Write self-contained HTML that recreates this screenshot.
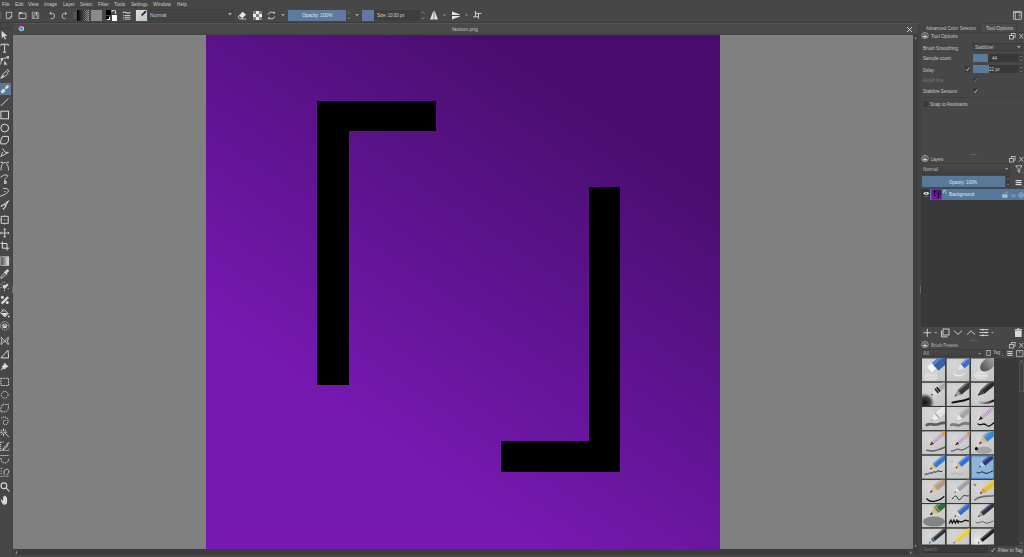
<!DOCTYPE html>
<html><head><meta charset="utf-8">
<style>
*{margin:0;padding:0;box-sizing:border-box}
html,body{width:1024px;height:557px;overflow:hidden;background:#474747;font-family:"Liberation Sans",sans-serif;color:#d6d6d6}
.a{position:absolute}
.m{position:absolute;top:1px;white-space:nowrap;font-size:6px;line-height:6px;color:#cfcfcf;transform:scaleX(.8);transform-origin:0 0}
.m2{position:absolute;white-space:nowrap;font-size:5.5px;line-height:6px;transform:scaleX(.85);transform-origin:0 0}
svg.a{overflow:visible}
.t{position:absolute;white-space:nowrap}
</style></head><body>
<!-- menu bar -->
<div class="a" style="left:0;top:0;width:1024px;height:8px;background:#464646"></div>
<div class="a" style="left:0;top:7px;width:1024px;height:1px;background:#434343"></div>

<div class="t" style="left:1.90px;top:1.56px;font-size:5.96px;line-height:5.96px;color:#cdcdcd;transform:scaleX(0.782);transform-origin:0 0;">File</div>
<div class="t" style="left:14.60px;top:1.56px;font-size:5.96px;line-height:5.96px;color:#cdcdcd;transform:scaleX(0.817);transform-origin:0 0;">Edit</div>
<div class="t" style="left:28.30px;top:1.56px;font-size:5.96px;line-height:5.96px;color:#cdcdcd;transform:scaleX(0.835);transform-origin:0 0;">View</div>
<div class="t" style="left:44.00px;top:1.56px;font-size:5.96px;line-height:5.96px;color:#cdcdcd;transform:scaleX(0.791);transform-origin:0 0;">Image</div>
<div class="t" style="left:63.00px;top:1.56px;font-size:5.96px;line-height:5.96px;color:#cdcdcd;transform:scaleX(0.785);transform-origin:0 0;">Layer</div>
<div class="t" style="left:80.00px;top:1.56px;font-size:5.96px;line-height:5.96px;color:#cdcdcd;transform:scaleX(0.742);transform-origin:0 0;">Select</div>
<div class="t" style="left:97.80px;top:1.56px;font-size:5.96px;line-height:5.96px;color:#cdcdcd;transform:scaleX(0.816);transform-origin:0 0;">Filter</div>
<div class="t" style="left:113.90px;top:1.56px;font-size:5.96px;line-height:5.96px;color:#cdcdcd;transform:scaleX(0.812);transform-origin:0 0;">Tools</div>
<div class="t" style="left:131.00px;top:1.56px;font-size:5.96px;line-height:5.96px;color:#cdcdcd;transform:scaleX(0.771);transform-origin:0 0;">Settings</div>
<div class="t" style="left:153.00px;top:1.56px;font-size:5.96px;line-height:5.96px;color:#cdcdcd;transform:scaleX(0.848);transform-origin:0 0;">Window</div>
<div class="t" style="left:176.90px;top:1.56px;font-size:5.96px;line-height:5.96px;color:#cdcdcd;transform:scaleX(0.800);transform-origin:0 0;">Help</div>
<!-- toolbar -->
<div class="a" style="left:0;top:8px;width:1024px;height:14px;background:#474747"></div>
<div class="a" style="left:0;top:22px;width:918px;height:1px;background:#3d3d3d"></div>
<div class="a" style="left:0;top:23px;width:918px;height:1px;background:#535353"></div>
<svg class="a" style="left:0;top:8px" width="500" height="14" viewBox="0 8 500 14">
 <g fill="none" stroke="#cfcfcf" stroke-width="0.8">
  <rect x="0" y="12" width="1.3" height="7" fill="#5c5c5c" stroke="none"/>
  <!-- new -->
  <path d="M6.3 12.3h5.4v4.6l-1.7 1.7h-3.7z"/>
  <path d="M10 18.6v-1.7h1.7" />
  <!-- open -->
  <path d="M19 13.2h7v5.4h-7z"/>
  <rect x="19" y="12.2" width="3" height="1.6" fill="#cfcfcf" stroke="none"/>
  <!-- save -->
  <path d="M31.8 11.8h6.3l1 1v6.3h-7.3z" fill="#8e8e8e" stroke="none"/>
  <rect x="33.5" y="13" width="4" height="2" fill="none" stroke="#555" stroke-width="0.7"/>
  <rect x="36.2" y="12.2" width="0.9" height="2.5" fill="#ddd" stroke="none"/>
  <rect x="34.2" y="16" width="2.8" height="1.8" fill="#555" stroke="none"/>
  <!-- undo -->
  <path d="M50 13.4h2.2a2.4 2.6 0 0 1 0 5.2h-1.6"/>
  <path d="M51.3 11.9l-1.6 1.5l1.6 1.5"/>
  <!-- redo -->
  <path d="M66 13.4h-1.6a2.4 2.6 0 0 0 0 5.2h1.2"/>
  <path d="M65 11.9l1.6 1.5l-1.6 1.5"/>
 </g>
 <rect x="73" y="11.7" width="3.5" height="7" fill="#565656"/>
</svg>
<!-- gradient swatch -->
<div class="a" style="left:77px;top:10px;width:11.5px;height:10.5px;background:linear-gradient(90deg,#000 0%,#222 25%,rgba(60,60,60,0) 100%),repeating-conic-gradient(#b0b0b0 0 25%,#505050 0 50%) 0 0/2px 2px"></div>
<!-- pattern swatch -->
<div class="a" style="left:91px;top:10px;width:10.5px;height:10.5px;background:#8a8a8a"></div>
<!-- fg/bg -->
<div class="a" style="left:106px;top:10px;width:5px;height:5px;background:#000"></div>
<div class="a" style="left:111.5px;top:15px;width:5.5px;height:5.5px;background:#fff"></div>
<div class="a" style="left:106px;top:16px;width:2.5px;height:2.5px;background:#000;box-shadow:1px 1px 0 #fff"></div>
<svg class="a" style="left:110px;top:9px" width="8" height="7" viewBox="0 0 8 7"><path d="M2 1.5h3.5v3M1 3l1-1.5 1 1.5M4.5 3.5l1 1 1-1" fill="none" stroke="#ddd" stroke-width="0.8"/></svg>
<!-- brush settings icon -->
<svg class="a" style="left:122px;top:9px" width="11" height="12" viewBox="0 0 11 12"><g fill="none" stroke="#d8d8d8" stroke-width="1.1"><path d="M0.8 3.8c1.5-1.6 2.8-.6 3.8 0s2.2 1 3.8-.6"/></g><g fill="#c4c4c4"><rect x="1.2" y="6" width="7.2" height="1"/><rect x="1.2" y="7.8" width="7.2" height="1"/><rect x="1.2" y="9.6" width="7.2" height="1"/></g><g fill="#474747"><rect x="2.2" y="5.8" width=".5" height="5"/></g></svg>
<!-- preset swatch -->
<div class="a" style="left:136px;top:10px;width:11px;height:11px;background:linear-gradient(135deg,#dcdcdc,#c6c6c6);box-shadow:0 0 0 .5px #555"></div>
<svg class="a" style="left:136px;top:10px" width="11" height="11" viewBox="0 0 11 11"><path d="M5.5 5.6L10 1.2" stroke="#1e2238" stroke-width="1.7"/><path d="M6.6 4.5l.8-.8" stroke="#a03030" stroke-width="1.7"/><path d="M3.8 7.4L5.6 5.5" stroke="#d8c070" stroke-width="1.1"/><path d="M3 9.5c2 .5 4 0 7 .3" stroke="#bbb" stroke-width=".6" fill="none"/></svg>
<!-- blend dropdown -->
<div class="a" style="left:148px;top:9px;width:86px;height:12px;background:#434343;border:1px solid #3f3f3f"></div>
<svg class="a" style="left:228px;top:13px" width="4" height="3" viewBox="0 0 4 3"><path d="M0 0h4l-2 2.5z" fill="#aaa"/></svg>
<!-- eraser -->
<svg class="a" style="left:238px;top:11px" width="9" height="9" viewBox="0 0 9 9"><path d="M4.5 0.8l3.5 2.6l-3.3 3.6l-3.5-2.6z" fill="#e6e6e6"/><path d="M1.2 4.4l3.5 2.6l-0.8 0.9h-2.2l-1.3-1.2z" fill="none" stroke="#e6e6e6" stroke-width="0.8"/><path d="M4 8h4" stroke="#e6e6e6" stroke-width="0.8"/></svg>
<!-- alpha lock checker -->
<svg class="a" style="left:253px;top:10.5px" width="9" height="9" viewBox="0 0 9 9"><rect width="9" height="9" fill="#808080"/><g fill="#eeeeee"><rect x="3" y="0" width="3" height="3"/><rect x="0" y="3" width="3" height="3"/><rect x="6" y="3" width="3" height="3"/><rect x="3" y="6" width="3" height="3"/></g></svg>
<!-- reload -->
<svg class="a" style="left:267px;top:11px" width="9" height="9" viewBox="0 0 9 9"><g fill="none" stroke="#d8d8d8" stroke-width="0.9"><path d="M1.2 3.5a3.5 3.5 0 0 1 6 -1.2"/><path d="M7.8 5.5a3.5 3.5 0 0 1 -6 1.2"/><path d="M6 1.4l1.4 1l0.2-1.6"/><path d="M3 7.6l-1.4 -1l-0.2 1.6"/></g></svg>
<svg class="a" style="left:281px;top:14px" width="4" height="3" viewBox="0 0 4 3"><path d="M0 0h4l-2 2.5z" fill="#999"/></svg>
<!-- opacity slider -->
<div class="a" style="left:288px;top:10px;width:58px;height:11px;background:#5b7c9c"></div>
<svg class="a" style="left:346px;top:10px" width="6" height="11" viewBox="0 0 6 11"><path d="M1.5 3.5l1.5-1.5 1.5 1.5M1.5 7.5l1.5 1.5 1.5-1.5" fill="none" stroke="#888" stroke-width="0.7"/></svg>
<svg class="a" style="left:355px;top:14px" width="4" height="3" viewBox="0 0 4 3"><path d="M0 0h4l-2 2.5z" fill="#999"/></svg>
<!-- size slider -->
<div class="a" style="left:362px;top:10px;width:58px;height:11px;background:#3e3e3e"></div>
<div class="a" style="left:362px;top:10px;width:12px;height:11px;background:#5b7c9c"></div>
<svg class="a" style="left:420px;top:10px" width="6" height="11" viewBox="0 0 6 11"><path d="M1.5 3.5l1.5-1.5 1.5 1.5M1.5 7.5l1.5 1.5 1.5-1.5" fill="none" stroke="#888" stroke-width="0.7"/></svg>
<!-- mirror H/V -->
<svg class="a" style="left:429px;top:10px" width="60" height="11" viewBox="0 0 60 11"><g fill="#e2e2e2">
 <path d="M1 9.5L4.3 1h0.4v8.5z"/><path d="M5.3 1h0.4L9 9.5H5.3z"/>
 <path d="M23 1.5L31 4.6v0.4H23z"/><path d="M23 6h8v0.4L23 9.5z"/>
 </g>
 <path d="M14 4.5h3l-1.5 1.5z" fill="#999"/><path d="M36 4.5h3l-1.5 1.5z" fill="#999"/>
 <g fill="none" stroke="#dcdcdc" stroke-width="0.9"><path d="M46.4 1v5.8M46.4 3.4h6.2M44 6.8h5.8M49.5 3.8v5"/></g>
</svg>
<!-- right layout icon -->
<svg class="a" style="left:1012px;top:10px" width="10" height="10" viewBox="0 0 10 10"><g fill="none" stroke="#cfcfcf" stroke-width="0.8"><rect x="1.5" y="1.4" width="8" height="8" rx=".6"/><path d="M1.5 2.4h8M3.3 2.6v6.8"/></g><g fill="#bbb"><rect x="6.6" y="3.6" width="2" height=".7"/><rect x="6.6" y="5.2" width="2" height=".7"/><rect x="6.6" y="6.8" width="2" height=".7"/></g></svg>
<div class="t" style="left:149.90px;top:13.20px;font-size:5.67px;line-height:5.67px;color:#c6c8d0;transform:scaleX(0.897);transform-origin:0 0;">Normal</div>
<div class="t" style="left:301.80px;top:12.86px;font-size:5.96px;line-height:5.96px;color:#e2e8f0;transform:scaleX(0.782);transform-origin:0 0;">Opacity: 100%</div>
<div class="t" style="left:376.80px;top:12.56px;font-size:5.96px;line-height:5.96px;color:#d6d6d6;transform:scaleX(0.725);transform-origin:0 0;">Size: 10.00 px</div>
<!-- toolbox column -->
<div class="a" style="left:0;top:24px;width:12px;height:533px;background:#474747"></div>
<div class="a" style="left:0;top:22px;width:11px;height:7px;border:1px solid #3c3c3c;background:#474747"></div>

<!-- canvas tab bar -->
<div class="a" style="left:13px;top:24px;width:905px;height:11px;background:linear-gradient(#4a4a4a 0,#4a4a4a 75%,#434343 100%)"></div>
<div class="a" style="left:12px;top:23px;width:1px;height:534px;background:#424242"></div>
<div class="t" style="left:452.00px;top:26.68px;font-size:5.81px;line-height:5.81px;color:#c4c4c4;transform:scaleX(0.874);transform-origin:0 0;">favicon.png</div>

<!-- canvas area -->
<div class="a" style="left:13px;top:35px;width:900px;height:514px;background:#808080"></div>
<!-- vertical scroll -->
<div class="a" style="left:913px;top:35px;width:5px;height:514px;background:#3e3e3e"></div>
<!-- horizontal scroll -->
<div class="a" style="left:13px;top:549px;width:905px;height:5.6px;background:#3c3c3c"></div><div class="a" style="left:13.3px;top:549.5px;width:5px;height:5px;border:0.5px solid #474747"></div><div class="a" style="left:907.5px;top:549.5px;width:5px;height:5px;border:0.5px solid #474747"></div>

<!-- purple image -->
<div class="a" style="left:206px;top:35px;width:514px;height:514px;background:linear-gradient(214deg,#4a0e70 19%,#7519b0 73%)">
  <div class="a" style="left:110.5px;top:66px;width:119.5px;height:30px;background:#000"></div>
  <div class="a" style="left:110.5px;top:66px;width:32px;height:284px;background:#000"></div>
  <div class="a" style="left:382.5px;top:152px;width:31.5px;height:284.5px;background:#000"></div>
  <div class="a" style="left:295px;top:406px;width:119px;height:30.5px;background:#000"></div>
</div>
<div class="a" style="left:14px;top:23.3px;width:904px;height:0.8px;background:#555"></div>
<svg class="a" style="left:18px;top:25px" width="7" height="7" viewBox="0 0 7 7"><defs><linearGradient id="kg" x1="0.3" y1="0" x2="0.6" y2="1"><stop offset="0" stop-color="#e040f0"/><stop offset=".45" stop-color="#f08ad0"/><stop offset=".55" stop-color="#60b0f0"/><stop offset="1" stop-color="#30f0e0"/></linearGradient></defs><circle cx="3.4" cy="3.5" r="2.8" fill="url(#kg)"/><path d="M5.6 2.6a2.8 2.8 0 0 1 -0.6 3.2l-1-1.2z" fill="#e8e040"/><path d="M2.2 2.8l2.6 1.8" stroke="#333" stroke-width=".7"/></svg>
<svg class="a" style="left:906px;top:26px" width="7" height="7" viewBox="0 0 7 7"><path d="M1 1l5 5M6 1l-5 5" stroke="#dadada" stroke-width=".9"/></svg>
<svg class="a" style="left:913px;top:35px" width="5" height="6" viewBox="0 0 5 6"><path d="M1 3.8h3l-1.5-1.8z" fill="#888"/></svg>
<svg class="a" style="left:913px;top:543px" width="5" height="6" viewBox="0 0 5 6"><path d="M1 2.2h3l-1.5 1.8z" fill="#888"/></svg>
<svg class="a" style="left:13px;top:548.5px" width="6" height="7" viewBox="0 0 6 7"><path d="M4 2v3L2.2 3.5z" fill="#999"/></svg>
<svg class="a" style="left:907.5px;top:548.5px" width="6" height="7" viewBox="0 0 6 7"><path d="M2 2v3l1.8-1.5z" fill="#999"/></svg>
<!-- toolbox icons -->
<svg width="0" height="0" style="position:absolute"><defs><linearGradient id="gr" x1="0" x2="1"><stop offset="0" stop-color="#444"/><stop offset="1" stop-color="#e8e8e8"/></linearGradient></defs></svg>
<div class="a" style="left:0;top:83px;width:10.5px;height:12px;background:#5b7896"></div>
<svg class="a" style="left:0;top:30.2px" width="10" height="10" viewBox="0 0 10 10"><path d="M1.6 0.8v7.4l1.9-1.6 1.4 3 1.2-.6-1.4-2.9h2.6z" fill="#d9d9d9"/></svg>
<svg class="a" style="left:0;top:42.7px" width="10" height="10" viewBox="0 0 10 10"><path d="M1 1.2h7.2v1.8M1 1.2v1.8M4.6 1.2v8M3 9.2h3.2" fill="none" stroke="#d9d9d9" stroke-width="1"/></svg>
<svg class="a" style="left:0;top:55.5px" width="10" height="10" viewBox="0 0 10 10"><g fill="none" stroke="#d9d9d9" stroke-width=".8"><path d="M0.5 8.5L1.8 3.2L7.6 1.3"/><rect x="1" y="2.5" width="1.6" height="1.6"/><rect x="7" y="0.6" width="1.6" height="1.6"/></g><path d="M4.3 4.6v5l1.2-1.1 1.8.2z" fill="#d9d9d9"/></svg>
<svg class="a" style="left:0;top:68.6px" width="10" height="10" viewBox="0 0 10 10"><g fill="none" stroke="#d9d9d9" stroke-width=".9"><path d="M0.8 9.2L3 5.2L6 2.4L8 4.4L5.2 7.3z"/><path d="M6.6 1.6l1.4-1 1 1-1 1.4"/><path d="M0.8 9.2L4 6.2"/></g></svg>
<svg class="a" style="left:0;top:83.8px" width="10" height="10" viewBox="0 0 10 10"><g fill="#d9d9d9"><ellipse cx="7" cy="3" rx="2.2" ry="1.4" transform="rotate(-45 7 3)"/><ellipse cx="3.1" cy="7.1" rx="2.5" ry="1.8" transform="rotate(-45 3.1 7.1)"/><path d="M4.5 5.7l1.5-1.5" stroke="#d9d9d9" stroke-width=".7"/></g></svg>
<svg class="a" style="left:0;top:96.6px" width="10" height="10" viewBox="0 0 10 10"><path d="M0.8 8.9L8.4 1.3" stroke="#d9d9d9" stroke-width="1"/></svg>
<svg class="a" style="left:0;top:109.6px" width="10" height="10" viewBox="0 0 10 10"><rect x="0.9" y="1.2" width="7.6" height="7.6" fill="none" stroke="#d9d9d9" stroke-width="1"/></svg>
<svg class="a" style="left:0;top:122.6px" width="10" height="10" viewBox="0 0 10 10"><circle cx="4.7" cy="5" r="3.9" fill="none" stroke="#d9d9d9" stroke-width="1"/></svg>
<svg class="a" style="left:0;top:135.3px" width="10" height="10" viewBox="0 0 10 10"><path d="M2.6 1.4h5.8v4.6L6 8.9H0.8v-3.8z" fill="none" stroke="#d9d9d9" stroke-width="1"/></svg>
<svg class="a" style="left:0;top:148.3px" width="10" height="10" viewBox="0 0 10 10"><path d="M2.6 0.6l2.4 3.7h3.5L0.8 8.6l1.8-4.6" fill="none" stroke="#d9d9d9" stroke-width=".9"/></svg>
<svg class="a" style="left:0;top:161.0px" width="10" height="10" viewBox="0 0 10 10"><g fill="none" stroke="#d9d9d9" stroke-width=".9"><path d="M1 9.4C1 4 3 1.5 4.6 1.5S8.5 4 8.5 9.4"/><path d="M0.5 1.3h2.5M6.5 1.3h2.5"/></g></svg>
<svg class="a" style="left:0;top:174.2px" width="10" height="10" viewBox="0 0 10 10"><g fill="none" stroke="#d9d9d9" stroke-width=".9"><path d="M0.5 3.3c2-1.5 4-3 6.5-2.2s-1 2.4-1.9 3.5 0 2.5.3 3.6"/><rect x="4.4" y="7.5" width="1.8" height="1.8"/></g></svg>
<svg class="a" style="left:0;top:186.5px" width="10" height="10" viewBox="0 0 10 10"><g fill="none" stroke="#d9d9d9" stroke-width="1"><path d="M0 9.3c4-1.2 8-3.3 8.4-5.4S5.5 1.2 3.2 1.4"/></g><circle cx="4.8" cy="4.6" r=".7" fill="#d9d9d9"/></svg>
<svg class="a" style="left:0;top:199.7px" width="10" height="10" viewBox="0 0 10 10"><g fill="none" stroke="#d9d9d9" stroke-width=".9"><path d="M8.5 0.8L2 5.5M8.5 0.8L4 8.5M8.5 0.8L6 4.5l-3 .6M5.8 4.6l-.4 3"/></g><circle cx="1.6" cy="6" r=".9" fill="#d9d9d9"/><circle cx="3.6" cy="8.8" r=".9" fill="#d9d9d9"/></svg>
<svg class="a" style="left:0;top:215.0px" width="10" height="10" viewBox="0 0 10 10"><g fill="none" stroke="#d9d9d9" stroke-width=".9"><rect x="1.2" y="1.3" width="7" height="7"/><path d="M0.5 5h1.5M7.5 5h1.5M4.7 0.3v1.5M4.7 8v1.5"/></g><circle cx="4.7" cy="4.8" r=".6" fill="#d9d9d9"/></svg>
<svg class="a" style="left:0;top:228.2px" width="10" height="10" viewBox="0 0 10 10"><g fill="none" stroke="#d9d9d9" stroke-width=".9"><path d="M4.7 0.6v8.8M0.3 5h8.8"/><path d="M3.6 1.8l1.1-1.2 1.1 1.2M3.6 8.2l1.1 1.2 1.1-1.2M1.5 3.9L.3 5l1.2 1.1M7.9 3.9L9.1 5 7.9 6.1"/></g></svg>
<svg class="a" style="left:0;top:241.0px" width="10" height="10" viewBox="0 0 10 10"><g fill="none" stroke="#d9d9d9" stroke-width="1"><path d="M2.4 0.6v6.6h6.8M0.6 2.5h6.4v7"/></g></svg>
<svg class="a" style="left:0;top:256.2px" width="10" height="10" viewBox="0 0 10 10"><rect x="0.8" y="0.8" width="8" height="8.6" fill="url(#gr)" stroke="#cfcfcf" stroke-width=".7"/></svg>
<svg class="a" style="left:0;top:269.0px" width="10" height="10" viewBox="0 0 10 10"><g fill="none" stroke="#d9d9d9" stroke-width=".9"><path d="M0.8 9.2L1.2 7.4 5.2 3.4l1.4 1.4L2.6 8.8z"/></g><path d="M4.6 3.2l2.2-2.3c.9-.9 2.4.5 1.5 1.5L6 4.6z M4.2 2.8l3 3" fill="#d9d9d9" stroke="#d9d9d9" stroke-width=".8"/></svg>
<svg class="a" style="left:0;top:281.2px" width="10" height="10" viewBox="0 0 10 10"><g fill="#d9d9d9"><path d="M3.2 6.8L7 2.4l1.6 1.4-4 4.4z"/><circle cx="4.3" cy="5.4" r="1.6"/><circle cx="1.2" cy="3.8" r=".55"/><circle cx="4.4" cy="1.2" r=".55"/><circle cx="1" cy="6.6" r=".55"/><circle cx="4.4" cy="9.4" r=".55"/><circle cx="8.2" cy="7.2" r=".55"/><circle cx="2.2" cy="1.8" r=".5"/></g></svg>
<svg class="a" style="left:0;top:294.7px" width="10" height="10" viewBox="0 0 10 10"><g fill="#d9d9d9"><circle cx="2.4" cy="2.3" r="1.5"/><circle cx="7.2" cy="7.4" r="1.5"/><path d="M0.8 7.8L7.4 1.2l1.6 1.6-6.6 6.6z"/></g></svg>
<svg class="a" style="left:0;top:307.6px" width="10" height="10" viewBox="0 0 10 10"><g><path d="M0.6 4.8L4 1.4 8.2 5.6 4.8 9z" fill="none" stroke="#d9d9d9" stroke-width="1"/><path d="M0.8 5h7.2L4.8 8.6z" fill="#d9d9d9"/><path d="M1.5 1.2l2.5 2.5" stroke="#d9d9d9" stroke-width=".8"/><circle cx="8.7" cy="8.5" r=".9" fill="#d9d9d9"/></g></svg>
<svg class="a" style="left:0;top:320.5px" width="10" height="10" viewBox="0 0 10 10"><g fill="none" stroke="#d9d9d9" stroke-width=".8" stroke-dasharray="1.2 .8"><circle cx="4.7" cy="4.8" r="4.2"/></g><path d="M2.2 4.7a2.6 2.6 0 0 1 5 0z" fill="none" stroke="#d9d9d9" stroke-width=".8"/><path d="M2.3 5.2h4.8a2.4 2.1 0 0 1 -4.8 0z" fill="#d9d9d9"/></svg>
<svg class="a" style="left:0;top:335.6px" width="10" height="10" viewBox="0 0 10 10"><g fill="none" stroke="#d9d9d9" stroke-width=".9"><path d="M0.8 0.8L8.6 9M8.6 0.8L0.8 9"/><path d="M0.6 2.2c1.6 1.6 1.6 4 0 5.6M8.8 2.2c-1.6 1.6-1.6 4 0 5.6"/></g></svg>
<svg class="a" style="left:0;top:349.0px" width="10" height="10" viewBox="0 0 10 10"><g fill="none" stroke="#d9d9d9" stroke-width="1"><path d="M0.9 8.9H8.6L8 1.2z"/></g></svg>
<svg class="a" style="left:0;top:361.0px" width="10" height="10" viewBox="0 0 10 10"><g fill="#d9d9d9"><path d="M4.4 1.6L8.6 5.8 6.8 6.3 4.6 8.5 3.7 7.6 1 9.6 0.6 9.2 2.6 6.5 1.7 5.6 3.9 3.4z"/></g></svg>
<svg class="a" style="left:0;top:376.8px" width="10" height="10" viewBox="0 0 10 10"><rect x="0.9" y="1.3" width="7.6" height="7.2" fill="none" stroke="#d9d9d9" stroke-width="1" stroke-dasharray="1.6 1"/></svg>
<svg class="a" style="left:0;top:389.6px" width="10" height="10" viewBox="0 0 10 10"><circle cx="4.7" cy="4.8" r="3.4" fill="none" stroke="#d9d9d9" stroke-width="1" stroke-dasharray="1.3 .9"/></svg>
<svg class="a" style="left:0;top:402.5px" width="10" height="10" viewBox="0 0 10 10"><path d="M2.6 1.4h5.8v4.6L6 8.9H0.8v-3.8z" fill="none" stroke="#d9d9d9" stroke-width="1" stroke-dasharray="1.5 1"/></svg>
<svg class="a" style="left:0;top:415.5px" width="10" height="10" viewBox="0 0 10 10"><path d="M1.2 2.2c2-2 5.5-1.5 6.6 1.2 1 2.6-.6 5.4-2.6 5.4S3 7 3.6 5.2 6 3.8 6 5.6" fill="none" stroke="#d9d9d9" stroke-width="1" stroke-dasharray="1.3 .8"/></svg>
<svg class="a" style="left:0;top:428.2px" width="10" height="10" viewBox="0 0 10 10"><g fill="none" stroke="#d9d9d9" stroke-width=".9"><path d="M4 4.2l5 5"/><path d="M3.5 0.4v2.6M3.5 5.4v2.6M0 4.2h2.6M4.5 4.2h2.6M1 1.6l1.6 1.6M6 1.6L4.4 3.2M1 6.8l1.6-1.6"/></g></svg>
<svg class="a" style="left:0;top:441.4px" width="10" height="10" viewBox="0 0 10 10"><g fill="none" stroke="#d9d9d9" stroke-width=".9"><path d="M0.6 1h3M0.6 1v8.4h2M0.6 9.4h8.4v-2" stroke-dasharray="1.2 .8"/><path d="M3.4 7.2L7 3.6l1 1-3.6 3.6-1.4.4z"/></g><path d="M6.6 3.2l1.4-1.8c.7-.6 1.5.2.9.9L7.3 3.8z" fill="#d9d9d9"/></svg>
<svg class="a" style="left:0;top:454.0px" width="10" height="10" viewBox="0 0 10 10"><g fill="none" stroke="#d9d9d9" stroke-width="1"><path d="M0.5 1.5h8.5" stroke-dasharray="1.2 .8"/><path d="M1 4c0 3.4 1.5 5 3.8 5S8.6 7.4 8.6 4" stroke-dasharray="1.4 .9"/></g></svg>
<svg class="a" style="left:0;top:467.2px" width="10" height="10" viewBox="0 0 10 10"><g fill="none" stroke="#d9d9d9" stroke-width=".9"><path d="M0.6 1.4h2.5M0.6 4h2M0.6 6.5h2M0.6 9.2h8.4" stroke-dasharray="1.2 .8"/><path d="M4.6 7.6c-1-1.6-.8-3.5.2-4.6s2.8-1 3.6 0 .4 2.4-.4 3.4l-1.2 1.4"/></g></svg>
<svg class="a" style="left:0;top:482.0px" width="10" height="10" viewBox="0 0 10 10"><g fill="none" stroke="#d9d9d9" stroke-width="1.1"><circle cx="3.9" cy="3.8" r="2.9"/><path d="M6 5.9l3.3 3.4"/></g></svg>
<svg class="a" style="left:0;top:495.2px" width="10" height="10" viewBox="0 0 10 10"><path d="M1.5 4.4l1.6 1.5V2c0-.6 1-.6 1 0v2.2V1c0-.6 1-.6 1 0v3.2V1.5c0-.6 1-.6 1 0v2.8-1.6c0-.6 1-.6 1 0v4.4c0 1.6-1 2.6-2.6 2.6H4.2C3 9.7 2.6 8.8 1.9 7.8L.9 5.1c-.3-.6.3-1 .6-.7z" fill="#d9d9d9"/></svg>
<div class="a" style="left:12px;top:286px;width:1px;height:7px;background:#6a6a6a"></div>
<div class="a" style="left:918px;top:25px;width:3px;height:532px;background:#424242;"></div>
<div class="a" style="left:919.5px;top:286px;width:1px;height:7px;background:#666;"></div>
<div class="a" style="left:918px;top:22px;width:106px;height:3px;background:#474747;"></div>
<div class="a" style="left:921px;top:24px;width:103px;height:533px;background:#474747;"></div>
<div class="a" style="left:921.8px;top:25.3px;width:58.5px;height:6.2px;background:#424242;"></div>
<div class="a" style="left:980.3px;top:23px;width:36.8px;height:8.5px;background:#4a4a4a;border:1px solid #404040;border-bottom:none"></div>
<div class="t" style="left:925.90px;top:25.92px;font-size:5.52px;line-height:5.52px;color:#c2c4c8;transform:scaleX(0.825);transform-origin:0 0;">Advanced Color Selector</div>
<div class="t" style="left:985.50px;top:25.72px;font-size:5.52px;line-height:5.52px;color:#c8cacc;transform:scaleX(0.889);transform-origin:0 0;">Tool Options</div>
<div class="a" style="left:921px;top:31.5px;width:103px;height:0.8px;background:#404040;"></div>
<svg class="a" style="left:921px;top:32.3px" width="8" height="7" viewBox="0 0 8 7"><g fill="none" stroke="#c8c8c8" stroke-width=".6"><ellipse cx="4" cy="3.5" rx="3.3" ry="3.1"/><path d="M1.6 4.6Q4 6.4 6.4 4.6M2.6 2.4Q4 1.4 5.4 2.4"/></g><ellipse cx="4" cy="4.3" rx="2" ry=".75" fill="#e8e8e8"/></svg>
<div class="t" style="left:930.60px;top:33.52px;font-size:5.52px;line-height:5.52px;color:#c8c8c8;transform:scaleX(0.869);transform-origin:0 0;">Tool Options</div>
<svg class="a" style="left:1008.7px;top:32.9px" width="15" height="7" viewBox="0 0 15 7"><g fill="none" stroke="#d0d0d0" stroke-width=".8"><rect x="2.3" y=".5" width="3.8" height="3.6"/><rect x=".5" y="2.4" width="3.8" height="3.6" fill="#474747"/><path d="M10.3 1l4 4.6M14.3 1l-4 4.6"/></g></svg>
<div class="t" style="left:922.80px;top:45.67px;font-size:5.23px;line-height:5.23px;color:#c8c8c8;transform:scaleX(0.870);transform-origin:0 0;">Brush Smoothing:</div>
<div class="a" style="left:972.5px;top:43.2px;width:50.1px;height:8.1px;background:#444;border:1px solid #3b3b3b"></div>
<div class="t" style="left:974.70px;top:45.72px;font-size:4.94px;line-height:4.94px;color:#c0c0c8;transform:scaleX(0.910);transform-origin:0 0;">Stabilizer</div>
<svg class="a" style="left:1016.5px;top:46px" width="4" height="3" viewBox="0 0 4 3"><path d="M0 0h3.6l-1.8 2.2z" fill="#aaa"/></svg>
<div class="t" style="left:922.80px;top:55.92px;font-size:5.52px;line-height:5.52px;color:#c8c8c8;transform:scaleX(0.827);transform-origin:0 0;">Sample count:</div>
<div class="a" style="left:972.5px;top:54px;width:45.2px;height:8px;background:#383838;"></div>
<div class="a" style="left:972.5px;top:54px;width:15.6px;height:8px;background:#5a7b9b;"></div>
<div class="t" style="left:992.40px;top:56.07px;font-size:5.23px;line-height:5.23px;color:#d0d0d0;transform:scaleX(0.844);transform-origin:0 0;">44</div>
<div class="a" style="left:1017.7px;top:54px;width:5px;height:8px;background:#3c3c3c;"></div>
<svg class="a" style="left:1018.5px;top:54.5px" width="4" height="7" viewBox="0 0 4 7"><path d="M.6 2.3l1.4-1.3 1.4 1.3M.6 4.7l1.4 1.3 1.4-1.3" fill="none" stroke="#999" stroke-width=".6"/></svg>
<div class="t" style="left:922.80px;top:67.79px;font-size:5.09px;line-height:5.09px;color:#c8c8c8;transform:scaleX(0.825);transform-origin:0 0;">Delay:</div>
<div class="a" style="left:965.1px;top:66.2px;width:5.2px;height:6.1px;background:#393939;"></div>
<svg class="a" style="left:965.1px;top:66.2px" width="6" height="6" viewBox="0 0 6 6"><path d="M1.2 3.2l1.2 1.6 2-3.6" fill="none" stroke="#ddd" stroke-width=".7"/></svg>
<div class="a" style="left:972.5px;top:65.3px;width:45.2px;height:8.1px;background:#383838;"></div>
<div class="a" style="left:972.5px;top:65.3px;width:16.2px;height:8.1px;background:#5a7b9b;"></div>
<div class="t" style="left:989.20px;top:67.49px;font-size:5.09px;line-height:5.09px;color:#d0d0d0;transform:scaleX(0.868);transform-origin:0 0;">22 px</div>
<div class="a" style="left:1017.7px;top:65.3px;width:5px;height:8.1px;background:#3c3c3c;"></div>
<svg class="a" style="left:1018.5px;top:65.8px" width="4" height="7" viewBox="0 0 4 7"><path d="M.6 2.3l1.4-1.3 1.4 1.3M.6 4.7l1.4 1.3 1.4-1.3" fill="none" stroke="#999" stroke-width=".6"/></svg>
<div class="t" style="left:922.80px;top:78.66px;font-size:4.65px;line-height:4.65px;color:#7a7a7a;transform:scaleX(0.972);transform-origin:0 0;">Finish line:</div>
<div class="a" style="left:972.5px;top:77.1px;width:5.4px;height:5.4px;background:#3c3c3c;"></div>
<svg class="a" style="left:972.5px;top:77.1px" width="6" height="6" viewBox="0 0 6 6"><path d="M1.2 3.2l1.2 1.6 2-3.6" fill="none" stroke="#888" stroke-width=".7"/></svg>
<div class="t" style="left:922.80px;top:88.68px;font-size:5.81px;line-height:5.81px;color:#c8c8c8;transform:scaleX(0.756);transform-origin:0 0;">Stabilize Sensors:</div>
<div class="a" style="left:972.5px;top:87.9px;width:5.4px;height:5.4px;background:#393939;"></div>
<svg class="a" style="left:972.5px;top:87.9px" width="6" height="6" viewBox="0 0 6 6"><path d="M1.2 3.2l1.2 1.6 2-3.6" fill="none" stroke="#ddd" stroke-width=".7"/></svg>
<div class="a" style="left:922px;top:97.3px;width:102px;height:0.8px;background:#404040;"></div>
<div class="a" style="left:922.6px;top:101.3px;width:5.4px;height:5.7px;background:#3a3a3a;"></div>
<div class="t" style="left:930.30px;top:102.05px;font-size:5.38px;line-height:5.38px;color:#c8c8c8;transform:scaleX(0.848);transform-origin:0 0;">Snap to Assistants</div>
<div class="a" style="left:970px;top:154px;width:7px;height:0.8px;background:#5e5e5e;"></div>
<svg class="a" style="left:921px;top:155px" width="8" height="7" viewBox="0 0 8 7"><g fill="none" stroke="#c8c8c8" stroke-width=".6"><ellipse cx="4" cy="3.5" rx="3.3" ry="3.1"/><path d="M1.6 4.6Q4 6.4 6.4 4.6M2.6 2.4Q4 1.4 5.4 2.4"/></g><ellipse cx="4" cy="4.3" rx="2" ry=".75" fill="#e8e8e8"/></svg>
<div class="t" style="left:930.80px;top:156.69px;font-size:5.09px;line-height:5.09px;color:#c8c8c8;transform:scaleX(0.812);transform-origin:0 0;">Layers</div>
<svg class="a" style="left:1008.7px;top:156px" width="15" height="7" viewBox="0 0 15 7"><g fill="none" stroke="#d0d0d0" stroke-width=".8"><rect x="2.3" y=".5" width="3.8" height="3.6"/><rect x=".5" y="2.4" width="3.8" height="3.6" fill="#474747"/><path d="M10.3 1l4 4.6M14.3 1l-4 4.6"/></g></svg>
<div class="a" style="left:922px;top:162.8px;width:88px;height:12.4px;background:linear-gradient(#4a4a4a,#3f3f3f);border:1px solid #3c3c3c"></div>
<div class="t" style="left:923.40px;top:167.07px;font-size:5.23px;line-height:5.23px;color:#b8bcc8;transform:scaleX(0.877);transform-origin:0 0;">Normal</div>
<svg class="a" style="left:1004.8px;top:167.6px" width="4" height="3" viewBox="0 0 4 3"><path d="M0 0h3.2l-1.6 1.8z" fill="#aaa"/></svg>
<svg class="a" style="left:1014.5px;top:164.5px" width="9" height="9" viewBox="0 0 9 9"><g fill="none" stroke="#d0d0d0" stroke-width=".8"><path d="M.7 .8h6.4L4.7 3.8v3.6L3.1 6.6V3.8z"/></g><path d="M7.3 7.6h1.4l-.7 .8z" fill="#aaa"/></svg>
<div class="a" style="left:922px;top:176.2px;width:83.1px;height:11.3px;background:#57799a;"></div>
<div class="t" style="left:948.60px;top:179.80px;font-size:5.67px;line-height:5.67px;color:#e0e6ee;transform:scaleX(0.765);transform-origin:0 0;">Opacity:  100%</div>
<div class="a" style="left:1005.6px;top:176.2px;width:4.6px;height:11.3px;background:#3b3b3b;"></div>
<svg class="a" style="left:1006px;top:177px" width="4" height="10" viewBox="0 0 4 10"><path d="M.7 2.7l1.3-1 1.3 1M.7 7l1.3 1 1.3-1" fill="none" stroke="#999" stroke-width=".6"/></svg>
<svg class="a" style="left:1014.5px;top:178.5px" width="9" height="9" viewBox="0 0 9 9"><g fill="#d8d8d8"><rect x=".6" y="1" width="6" height="1.2"/><rect x=".6" y="3" width="6" height="1.2"/><rect x=".6" y="5" width="6" height="1.2"/></g><path d="M7.3 7.4h1.4l-.7 .8z" fill="#aaa"/></svg>
<div class="a" style="left:921px;top:188.5px;width:103px;height:138.5px;background:#393939;"></div>
<div class="a" style="left:930.3px;top:189px;width:93.7px;height:10.9px;background:#56789a;"></div>
<svg class="a" style="left:923px;top:191.3px" width="6.5" height="6.5" viewBox="0 0 6.5 6.5"><path d="M.3 2.4C1.5 .6 5 .6 6.2 2.4 5 4.2 1.5 4.2.3 2.4z" fill="#e8e8e8"/><circle cx="3.25" cy="2.3" r=".9" fill="#555"/><path d="M1.5 5.2h3.5" stroke="#999" stroke-width=".5"/></svg>
<div class="a" style="left:931.8px;top:190px;width:8.9px;height:8.9px;background:linear-gradient(214deg,#4a0e70 19%,#7519b0 73%);box-shadow:0 0 0 .5px #303030"><div class="a" style="left:1.9px;top:1.1px;width:2.1px;height:.5px;background:#000;opacity:.8"></div><div class="a" style="left:1.9px;top:1.1px;width:.55px;height:4.9px;background:#000;opacity:.8"></div><div class="a" style="left:6.6px;top:2.6px;width:.55px;height:4.9px;background:#000;opacity:.8"></div><div class="a" style="left:5.1px;top:7px;width:2.1px;height:.5px;background:#000;opacity:.8"></div></div>
<svg class="a" style="left:943.2px;top:189.8px" width="5" height="4" viewBox="0 0 5 4"><path d="M.5 3.5V.5h3M1 1l3 2.8" fill="none" stroke="#ddd" stroke-width=".6"/></svg>
<div class="t" style="left:948.60px;top:193.24px;font-size:4.80px;line-height:4.80px;color:#e4e8ee;transform:scaleX(0.985);transform-origin:0 0;">Background</div>
<svg class="a" style="left:1001.5px;top:191.5px" width="22" height="6" viewBox="0 0 22 6"><g fill="none" stroke="#a9bccc" stroke-width=".6"><rect x=".6" y="2.6" width="4.6" height="2.8" fill="#a9bccc"/><path d="M3.4 2.6V1.2a1.2 1.2 0 0 1 2.4 0"/><path d="M9 3.2a2 2 0 1 0 3.8 -1M9.5 1.6l3 2.8"/><circle cx="19.2" cy="3.2" r="2.4"/><path d="M19.2 .2v6M16.2 3.2h6"/></g></svg>
<div class="a" style="left:921px;top:327px;width:103px;height:12px;background:#474747;"></div>
<svg class="a" style="left:922px;top:328px" width="102" height="10" viewBox="0 0 102 10"><g fill="none" stroke="#d8d8d8" stroke-width=".9"><path d="M5.3 .8v8M1.5 4.7h7.6"/><path d="M12.5 4.7h2.4" stroke-width=".7"/><rect x="21" y="1" width="6" height="6"/><path d="M19.4 2.6v6.3h6.2"/><path d="M32 2.6l4 3.8 4-3.8"/><path d="M45 6.6l4-3.8 4 3.8"/><path d="M57.5 1.6h9M57.5 4.5h9M57.5 7.4h9"/></g><g fill="#d8d8d8"><rect x="60" y=".9" width="2" height="1.4"/><rect x="63" y="3.8" width="2" height="1.4"/><rect x="60" y="6.7" width="2" height="1.4"/><path d="M69 4h2.6l-1.3 1.4z" fill="#aaa"/><rect x="93" y="2.4" width="6.6" height="6.6"/><rect x="92.6" y="1.2" width="7.4" height=".9"/><rect x="95" y=".4" width="2.6" height=".9"/></g></svg>
<div class="a" style="left:970px;top:340.3px;width:7px;height:0.8px;background:#5e5e5e;"></div>
<svg class="a" style="left:921.2px;top:341px" width="8" height="7" viewBox="0 0 8 7"><g fill="none" stroke="#c8c8c8" stroke-width=".6"><ellipse cx="4" cy="3.5" rx="3.3" ry="3.1"/><path d="M1.6 4.6Q4 6.4 6.4 4.6M2.6 2.4Q4 1.4 5.4 2.4"/></g><ellipse cx="4" cy="4.3" rx="2" ry=".75" fill="#e8e8e8"/></svg>
<div class="t" style="left:930.90px;top:342.97px;font-size:5.23px;line-height:5.23px;color:#b4b4b8;transform:scaleX(0.819);transform-origin:0 0;">Brush Presets</div>
<svg class="a" style="left:1008.7px;top:342.1px" width="15" height="7" viewBox="0 0 15 7"><g fill="none" stroke="#d0d0d0" stroke-width=".8"><rect x="2.3" y=".5" width="3.8" height="3.6"/><rect x=".5" y="2.4" width="3.8" height="3.6" fill="#474747"/><path d="M10.3 1l4 4.6M14.3 1l-4 4.6"/></g></svg>
<div class="a" style="left:922px;top:349.3px;width:61.7px;height:8px;background:linear-gradient(#474747,#404040);border:1px solid #3c3c3c"></div>
<div class="t" style="left:923.00px;top:351.66px;font-size:4.65px;line-height:4.65px;color:#a8acb8;transform:scaleX(1.123);transform-origin:0 0;">All</div>
<svg class="a" style="left:978.3px;top:352.8px" width="4" height="3" viewBox="0 0 4 3"><path d="M0 0h3l-1.5 1.7z" fill="#999"/></svg>
<div class="a" style="left:985.5px;top:349.3px;width:19px;height:6.5px;background:#434343;border:1px solid #3d3d3d"></div>
<svg class="a" style="left:986px;top:349.7px" width="5" height="6" viewBox="0 0 5 6"><rect x=".8" y=".4" width="3.4" height="5.2" fill="none" stroke="#d0d0d0" stroke-width=".7"/></svg>
<div class="t" style="left:992.70px;top:351.34px;font-size:4.80px;line-height:4.80px;color:#b8bcc8;transform:scaleX(0.945);transform-origin:0 0;">Tag</div>
<svg class="a" style="left:1002px;top:354.5px" width="2" height="1.5" viewBox="0 0 2 1.5"><path d="M0 .4h1.8" stroke="#aaa" stroke-width=".6"/></svg>
<svg class="a" style="left:1006.8px;top:350.8px" width="6" height="5" viewBox="0 0 6 5"><g fill="#d8d8d8"><rect x=".2" y=".2" width="5.4" height="1"/><rect x=".2" y="2" width="5.4" height="1"/><rect x=".2" y="3.8" width="5.4" height="1"/></g></svg>
<svg class="a" style="left:1015.8px;top:349.5px" width="8" height="7" viewBox="0 0 8 7"><g fill="none" stroke="#cfcfcf" stroke-width=".7"><path d="M.5 .5h6.4v6.1H.5z"/><path d="M3.7 .8v2.2"/></g></svg>
<div class="a" style="left:921px;top:357.5px;width:97.5px;height:188px;background:#393939"></div>
<svg class="a" style="left:921px;top:358px" width="80" height="188" viewBox="921 358 80 188">
<defs><clipPath id="gc"><rect x="921" y="358" width="80" height="186.6"/></clipPath><radialGradient id="cb" cx=".35" cy=".3" r=".9"><stop offset="0" stop-color="#d6d6d6"/><stop offset="1" stop-color="#c2c2c2"/></radialGradient><radialGradient id="rb"><stop offset="0" stop-color="#111"/><stop offset=".6" stop-color="#222" stop-opacity=".8"/><stop offset="1" stop-color="#444" stop-opacity="0"/></radialGradient><linearGradient id="gb" x1="0" x2="1"><stop offset="0" stop-color="#505050"/><stop offset="1" stop-color="#a8a8a8"/></linearGradient><linearGradient id="lg" x1="0" x2="1"><stop offset="0" stop-color="#ddd"/><stop offset="1" stop-color="#111"/></linearGradient><radialGradient id="rw" cx=".3" cy=".55" r=".6"><stop offset="0" stop-color="#f0f0f0"/><stop offset="1" stop-color="#c8c8c8" stop-opacity="0"/></radialGradient></defs><g clip-path="url(#gc)">
<g transform="translate(921.90 358.30)"><svg width="23.20" height="23.30" overflow="hidden"><rect width="23.20" height="23.30" fill="url(#cb)"/><circle cx="3.4" cy="17.0" r=".55" fill="#f4f4f4"/><circle cx="2.6" cy="18.5" r=".55" fill="#f4f4f4"/><circle cx="3.4" cy="20.0" r=".55" fill="#f4f4f4"/><circle cx="4.2" cy="15.5" r=".55" fill="#f4f4f4"/><circle cx="5.0" cy="17.0" r=".55" fill="#f4f4f4"/><circle cx="4.2" cy="18.5" r=".55" fill="#f4f4f4"/><circle cx="5.0" cy="20.0" r=".55" fill="#f4f4f4"/><circle cx="4.2" cy="21.5" r=".55" fill="#f4f4f4"/><circle cx="5.8" cy="15.5" r=".55" fill="#f4f4f4"/><circle cx="6.6" cy="17.0" r=".55" fill="#f4f4f4"/><circle cx="5.8" cy="18.5" r=".55" fill="#f4f4f4"/><circle cx="6.6" cy="20.0" r=".55" fill="#f4f4f4"/><circle cx="5.8" cy="21.5" r=".55" fill="#f4f4f4"/><circle cx="7.4" cy="15.5" r=".55" fill="#f4f4f4"/><circle cx="8.2" cy="17.0" r=".55" fill="#f4f4f4"/><circle cx="7.4" cy="18.5" r=".55" fill="#f4f4f4"/><circle cx="8.2" cy="20.0" r=".55" fill="#f4f4f4"/><circle cx="7.4" cy="21.5" r=".55" fill="#f4f4f4"/><circle cx="9.0" cy="15.5" r=".55" fill="#f4f4f4"/><circle cx="9.8" cy="17.0" r=".55" fill="#f4f4f4"/><circle cx="9.0" cy="18.5" r=".55" fill="#f4f4f4"/><circle cx="9.8" cy="20.0" r=".55" fill="#f4f4f4"/><circle cx="9.0" cy="21.5" r=".55" fill="#f4f4f4"/><circle cx="10.6" cy="15.5" r=".55" fill="#f4f4f4"/><circle cx="11.4" cy="17.0" r=".55" fill="#f4f4f4"/><circle cx="10.6" cy="18.5" r=".55" fill="#f4f4f4"/><circle cx="11.4" cy="20.0" r=".55" fill="#f4f4f4"/><circle cx="10.6" cy="21.5" r=".55" fill="#f4f4f4"/><circle cx="12.2" cy="15.5" r=".55" fill="#f4f4f4"/><circle cx="13.0" cy="17.0" r=".55" fill="#f4f4f4"/><circle cx="12.2" cy="18.5" r=".55" fill="#f4f4f4"/><circle cx="13.0" cy="20.0" r=".55" fill="#f4f4f4"/><circle cx="12.2" cy="21.5" r=".55" fill="#f4f4f4"/><circle cx="13.8" cy="15.5" r=".55" fill="#f4f4f4"/><circle cx="14.6" cy="17.0" r=".55" fill="#f4f4f4"/><circle cx="13.8" cy="18.5" r=".55" fill="#f4f4f4"/><circle cx="14.6" cy="20.0" r=".55" fill="#f4f4f4"/><circle cx="13.8" cy="21.5" r=".55" fill="#f4f4f4"/><circle cx="15.4" cy="18.5" r=".55" fill="#f4f4f4"/><g transform="translate(8.5 12.5) rotate(-40)"><rect x="5" y="-5" width="16" height="10" fill="#3560a8"/><rect x="5" y="-5" width="16" height="3" fill="#5a86c8"/><rect x="0" y="-5" width="6" height="10" fill="#f6f6f6"/><rect x="0" y="2" width="6" height="3" fill="#cfcfcf"/></g></svg>
</g>
<g transform="translate(946.40 358.30)"><svg width="23.20" height="23.30" overflow="hidden"><rect width="23.20" height="23.30" fill="url(#cb)"/><path d="M7 15c2 4 9 3 11 0" fill="none" stroke="#fff" stroke-width="0.9" stroke-linecap="round" opacity="1"/><g transform="translate(11.00 12.00) rotate(-40)"><path d="M0 0L6.68 -3.04L6.68 3.04z" fill="#e0e8f0"/><path d="M0 0L2.34 -1.03L2.34 1.03z" fill="#c8d8e8"/><rect x="6.68" y="-3.04" width="14.00" height="6.08" fill="#3a6ccc"/><rect x="6.68" y="-3.04" width="14.00" height="1.82" fill="#fff" opacity=".25"/></g></svg>
</g>
<g transform="translate(970.90 358.30)"><svg width="23.20" height="23.30" overflow="hidden"><rect width="23.20" height="23.30" fill="url(#cb)"/><circle cx="4.4" cy="15.5" r=".55" fill="#fff"/><circle cx="3.6" cy="17.0" r=".55" fill="#fff"/><circle cx="4.4" cy="18.5" r=".55" fill="#fff"/><circle cx="6.0" cy="15.5" r=".55" fill="#fff"/><circle cx="5.2" cy="17.0" r=".55" fill="#fff"/><circle cx="6.0" cy="18.5" r=".55" fill="#fff"/><circle cx="6.8" cy="14.0" r=".55" fill="#fff"/><circle cx="7.6" cy="15.5" r=".55" fill="#fff"/><circle cx="6.8" cy="17.0" r=".55" fill="#fff"/><circle cx="7.6" cy="18.5" r=".55" fill="#fff"/><circle cx="6.8" cy="20.0" r=".55" fill="#fff"/><circle cx="8.4" cy="14.0" r=".55" fill="#fff"/><circle cx="9.2" cy="15.5" r=".55" fill="#fff"/><circle cx="8.4" cy="17.0" r=".55" fill="#fff"/><circle cx="9.2" cy="18.5" r=".55" fill="#fff"/><circle cx="8.4" cy="20.0" r=".55" fill="#fff"/><circle cx="10.0" cy="14.0" r=".55" fill="#fff"/><circle cx="10.8" cy="15.5" r=".55" fill="#fff"/><circle cx="10.0" cy="17.0" r=".55" fill="#fff"/><circle cx="10.8" cy="18.5" r=".55" fill="#fff"/><circle cx="10.0" cy="20.0" r=".55" fill="#fff"/><circle cx="11.6" cy="14.0" r=".55" fill="#fff"/><circle cx="12.4" cy="15.5" r=".55" fill="#fff"/><circle cx="11.6" cy="17.0" r=".55" fill="#fff"/><circle cx="12.4" cy="18.5" r=".55" fill="#fff"/><circle cx="11.6" cy="20.0" r=".55" fill="#fff"/><circle cx="13.2" cy="14.0" r=".55" fill="#fff"/><circle cx="14.0" cy="15.5" r=".55" fill="#fff"/><circle cx="13.2" cy="17.0" r=".55" fill="#fff"/><circle cx="14.0" cy="18.5" r=".55" fill="#fff"/><circle cx="13.2" cy="20.0" r=".55" fill="#fff"/><circle cx="15.6" cy="15.5" r=".55" fill="#fff"/><circle cx="14.8" cy="17.0" r=".55" fill="#fff"/><circle cx="15.6" cy="18.5" r=".55" fill="#fff"/><circle cx="16.4" cy="17.0" r=".55" fill="#fff"/><ellipse cx="17" cy="6" rx="9" ry="5.5" transform="rotate(-40 17 6)" fill="url(#gb)"/></svg>
</g>
<g transform="translate(921.90 382.60)"><svg width="23.20" height="23.30" overflow="hidden"><rect width="23.20" height="23.30" fill="url(#cb)"/><circle cx="3" cy="20" r="9.5" fill="url(#rb)"/><g transform="translate(9.00 13.00) rotate(-40)"><path d="M0 0L5.94 -2.70L5.94 2.70z" fill="#e0e0e0"/><path d="M0 0L2.08 -0.92L2.08 0.92z" fill="#222"/><rect x="5.94" y="-2.70" width="14.00" height="5.40" fill="#a8a8a8"/><rect x="5.94" y="-2.70" width="14.00" height="1.62" fill="#fff" opacity=".25"/><rect x="6.94" y="-2.70" width="1.2" height="5.40" fill="#111"/></g><g transform="translate(9 13) rotate(-40)"><rect x="9" y="-2.7" width="1.5" height="5.4" fill="#111"/></g></svg>
</g>
<g transform="translate(946.40 382.60)"><svg width="23.20" height="23.30" overflow="hidden"><rect width="23.20" height="23.30" fill="url(#cb)"/><path d="M6 20c4-1 10-1 17-4" fill="none" stroke="#111" stroke-width="2" stroke-linecap="round" opacity="1"/><g transform="translate(8.00 14.00) rotate(-40)"><path d="M0 0L6.68 -3.04L6.68 3.04z" fill="#9a9a9a"/><path d="M0 0L2.34 -1.03L2.34 1.03z" fill="#444"/><rect x="6.68" y="-3.04" width="17.00" height="6.08" fill="#3a3a3a"/><rect x="6.68" y="-3.04" width="17.00" height="1.82" fill="#fff" opacity=".25"/></g></svg>
</g>
<g transform="translate(970.90 382.60)"><svg width="23.20" height="23.30" overflow="hidden"><rect width="23.20" height="23.30" fill="url(#cb)"/><path d="M5 18c5 3 12 3 18 0" fill="none" stroke="url(#lg)" stroke-width="2.2" stroke-linecap="round" opacity="1"/><g transform="translate(7.00 13.00) rotate(-40)"><path d="M0 0L6.24 -2.84L6.24 2.84z" fill="#444"/><path d="M0 0L2.18 -0.96L2.18 0.96z" fill="#111"/><rect x="6.24" y="-2.84" width="18.00" height="5.67" fill="#2a2a2a"/><rect x="6.24" y="-2.84" width="18.00" height="1.70" fill="#fff" opacity=".25"/></g></svg>
</g>
<g transform="translate(921.90 406.90)"><svg width="23.20" height="23.30" overflow="hidden"><rect width="23.20" height="23.30" fill="url(#cb)"/><path d="M5 18c3-2 8 1 12-1 2-1 4-1 6-1" fill="none" stroke="#3a3a3a" stroke-width="2.8" stroke-linecap="round" opacity="0.75"/><g transform="translate(9.00 14.00) rotate(-40)"><path d="M0 0L6.68 -3.04L6.68 3.04z" fill="#f0f0f0"/><path d="M0 0L2.34 -1.03L2.34 1.03z" fill="#999"/><rect x="6.68" y="-3.04" width="17.00" height="6.08" fill="#e4e4e4"/><rect x="6.68" y="-3.04" width="17.00" height="1.82" fill="#fff" opacity=".25"/><rect x="7.68" y="-3.04" width="1.2" height="6.08" fill="#e09050"/></g></svg>
</g>
<g transform="translate(946.40 406.90)"><svg width="23.20" height="23.30" overflow="hidden"><rect width="23.20" height="23.30" fill="url(#cb)"/><path d="M5 18c3-2 6 2 9 0s6-2 9-1" fill="none" stroke="#555" stroke-width="2.8" stroke-linecap="round" opacity="0.65"/><g transform="translate(9.00 14.00) rotate(-40)"><path d="M0 0L6.68 -3.04L6.68 3.04z" fill="#e8e8e8"/><path d="M0 0L2.34 -1.03L2.34 1.03z" fill="#bbb"/><rect x="6.68" y="-3.04" width="17.00" height="6.08" fill="#a4a4a4"/><rect x="6.68" y="-3.04" width="17.00" height="1.82" fill="#fff" opacity=".25"/></g></svg>
</g>
<g transform="translate(970.90 406.90)"><svg width="23.20" height="23.30" overflow="hidden"><rect width="23.20" height="23.30" fill="url(#cb)"/><path d="M7 17c3 3 5-2 8 1s5 0 8-2" fill="none" stroke="#111" stroke-width="1.3" stroke-linecap="round" opacity="1"/><g transform="translate(8.00 13.00) rotate(-40)"><path d="M0 0L4.16 -1.89L4.16 1.89z" fill="#3a1a1a"/><path d="M0 0L1.46 -0.64L1.46 0.64z" fill="#200"/><rect x="4.16" y="-1.89" width="18.00" height="3.78" fill="#d8c8e0"/><rect x="4.16" y="-1.89" width="18.00" height="1.13" fill="#fff" opacity=".25"/><rect x="5.16" y="-1.89" width=".7" height="3.78" fill="#8a6a9a" opacity=".7"/><rect x="6.76" y="-1.89" width=".7" height="3.78" fill="#8a6a9a" opacity=".7"/><rect x="8.36" y="-1.89" width=".7" height="3.78" fill="#8a6a9a" opacity=".7"/><rect x="9.96" y="-1.89" width=".7" height="3.78" fill="#8a6a9a" opacity=".7"/><rect x="11.56" y="-1.89" width=".7" height="3.78" fill="#8a6a9a" opacity=".7"/><rect x="13.16" y="-1.89" width=".7" height="3.78" fill="#8a6a9a" opacity=".7"/><rect x="14.76" y="-1.89" width=".7" height="3.78" fill="#8a6a9a" opacity=".7"/><rect x="16.36" y="-1.89" width=".7" height="3.78" fill="#8a6a9a" opacity=".7"/><rect x="17.96" y="-1.89" width=".7" height="3.78" fill="#8a6a9a" opacity=".7"/><rect x="19.56" y="-1.89" width=".7" height="3.78" fill="#8a6a9a" opacity=".7"/><rect x="21.16" y="-1.89" width=".7" height="3.78" fill="#8a6a9a" opacity=".7"/></g></svg>
</g>
<g transform="translate(921.90 431.20)"><svg width="23.20" height="23.30" overflow="hidden"><rect width="23.20" height="23.30" fill="url(#cb)"/><path d="M5 19c4 1 9 1 13-1l5-2" fill="none" stroke="#333" stroke-width="1.5" stroke-linecap="round" opacity="0.7"/><g transform="translate(8.00 14.00) rotate(-40)"><path d="M0 0L4.16 -1.89L4.16 1.89z" fill="#6a3a2a"/><path d="M0 0L1.46 -0.64L1.46 0.64z" fill="#201010"/><rect x="4.16" y="-1.89" width="18.00" height="3.78" fill="#d8c8e0"/><rect x="4.16" y="-1.89" width="18.00" height="1.13" fill="#fff" opacity=".25"/><rect x="5.16" y="-1.89" width=".7" height="3.78" fill="#8a6a9a" opacity=".7"/><rect x="6.76" y="-1.89" width=".7" height="3.78" fill="#8a6a9a" opacity=".7"/><rect x="8.36" y="-1.89" width=".7" height="3.78" fill="#8a6a9a" opacity=".7"/><rect x="9.96" y="-1.89" width=".7" height="3.78" fill="#8a6a9a" opacity=".7"/><rect x="11.56" y="-1.89" width=".7" height="3.78" fill="#8a6a9a" opacity=".7"/><rect x="13.16" y="-1.89" width=".7" height="3.78" fill="#8a6a9a" opacity=".7"/><rect x="14.76" y="-1.89" width=".7" height="3.78" fill="#8a6a9a" opacity=".7"/><rect x="16.36" y="-1.89" width=".7" height="3.78" fill="#8a6a9a" opacity=".7"/><rect x="17.96" y="-1.89" width=".7" height="3.78" fill="#8a6a9a" opacity=".7"/><rect x="19.56" y="-1.89" width=".7" height="3.78" fill="#8a6a9a" opacity=".7"/><rect x="21.16" y="-1.89" width=".7" height="3.78" fill="#8a6a9a" opacity=".7"/><rect x="16.76" y="-1.89" width="7.20" height="3.78" fill="#e8a020"/></g></svg>
</g>
<g transform="translate(946.40 431.20)"><svg width="23.20" height="23.30" overflow="hidden"><rect width="23.20" height="23.30" fill="url(#cb)"/><path d="M5 20c4 0 5-3 7-2s4 2 11-3" fill="none" stroke="#222" stroke-width="0.8" stroke-linecap="round" opacity="1"/><g transform="translate(9.00 14.00) rotate(-40)"><path d="M0 0L3.86 -1.76L3.86 1.76z" fill="#6a2a2a"/><path d="M0 0L1.35 -0.60L1.35 0.60z" fill="#201010"/><rect x="3.86" y="-1.76" width="18.00" height="3.51" fill="#d8c8e0"/><rect x="3.86" y="-1.76" width="18.00" height="1.05" fill="#fff" opacity=".25"/><rect x="4.86" y="-1.76" width=".7" height="3.51" fill="#8a6a9a" opacity=".7"/><rect x="6.46" y="-1.76" width=".7" height="3.51" fill="#8a6a9a" opacity=".7"/><rect x="8.06" y="-1.76" width=".7" height="3.51" fill="#8a6a9a" opacity=".7"/><rect x="9.66" y="-1.76" width=".7" height="3.51" fill="#8a6a9a" opacity=".7"/><rect x="11.26" y="-1.76" width=".7" height="3.51" fill="#8a6a9a" opacity=".7"/><rect x="12.86" y="-1.76" width=".7" height="3.51" fill="#8a6a9a" opacity=".7"/><rect x="14.46" y="-1.76" width=".7" height="3.51" fill="#8a6a9a" opacity=".7"/><rect x="16.06" y="-1.76" width=".7" height="3.51" fill="#8a6a9a" opacity=".7"/><rect x="17.66" y="-1.76" width=".7" height="3.51" fill="#8a6a9a" opacity=".7"/><rect x="19.26" y="-1.76" width=".7" height="3.51" fill="#8a6a9a" opacity=".7"/><rect x="20.86" y="-1.76" width=".7" height="3.51" fill="#8a6a9a" opacity=".7"/><rect x="16.46" y="-1.76" width="7.20" height="3.51" fill="#e88a20"/></g></svg>
</g>
<g transform="translate(970.90 431.20)"><svg width="23.20" height="23.30" overflow="hidden"><rect width="23.20" height="23.30" fill="url(#cb)"/><ellipse cx="13" cy="19" rx="8" ry="3.5" fill="#888" opacity=".6"/><circle cx="5.5" cy="17.5" r="1.6" fill="#111"/><g transform="translate(8.00 13.00) rotate(-40)"><path d="M0 0L8.17 -3.71L8.17 3.71z" fill="#d8b888"/><path d="M0 0L2.86 -1.26L2.86 1.26z" fill="#333"/><rect x="8.17" y="-3.71" width="17.00" height="7.43" fill="#3a8ad0"/><rect x="8.17" y="-3.71" width="17.00" height="2.23" fill="#fff" opacity=".25"/></g></svg>
</g>
<g transform="translate(921.90 455.50)"><svg width="23.20" height="23.30" overflow="hidden"><rect width="23.20" height="23.30" fill="url(#cb)"/><path d="M3 19c2-2 3 1 4-1s3 1 4-1 3 1 4-1 3 1 5 0" fill="none" stroke="#222" stroke-width="1" stroke-linecap="round" opacity="1"/><g transform="translate(8.00 14.00) rotate(-40)"><path d="M0 0L5.94 -2.70L5.94 2.70z" fill="#d8b888"/><path d="M0 0L2.08 -0.92L2.08 0.92z" fill="#222"/><rect x="5.94" y="-2.70" width="17.00" height="5.40" fill="#2f7ad0"/><rect x="5.94" y="-2.70" width="17.00" height="1.62" fill="#fff" opacity=".25"/></g></svg>
</g>
<g transform="translate(946.40 455.50)"><svg width="23.20" height="23.30" overflow="hidden"><rect width="23.20" height="23.30" fill="url(#cb)"/><circle cx="5" cy="6" r="1.2" fill="none" stroke="#aaa" stroke-width=".5"/><path d="M5 18c2 2 4-2 6 0s4 1 6-1" fill="none" stroke="#999" stroke-width="0.6" stroke-linecap="round" opacity="1"/><g transform="translate(9.00 13.00) rotate(-40)"><path d="M0 0L5.94 -2.70L5.94 2.70z" fill="#d8b888"/><path d="M0 0L2.08 -0.92L2.08 0.92z" fill="#222"/><rect x="5.94" y="-2.70" width="17.00" height="5.40" fill="#2f6ed8"/><rect x="5.94" y="-2.70" width="17.00" height="1.62" fill="#fff" opacity=".25"/></g></svg>
</g>
<g transform="translate(970.90 455.50)"><svg width="23.20" height="23.30" overflow="hidden"><rect width="23.20" height="23.30" fill="#8db5d8"/><path d="M6 17c3 2 4-2 7 0s5 0 10-2" fill="none" stroke="#223" stroke-width="1" stroke-linecap="round" opacity="1"/><g transform="translate(8.00 12.00) rotate(-40)"><path d="M0 0L5.94 -2.70L5.94 2.70z" fill="#a8d0e0"/><path d="M0 0L2.08 -0.92L2.08 0.92z" fill="#222"/><rect x="5.94" y="-2.70" width="17.00" height="5.40" fill="#2a3a78"/><rect x="5.94" y="-2.70" width="17.00" height="1.62" fill="#fff" opacity=".25"/></g></svg>
<rect x=".5" y=".5" width="22.20" height="22.30" fill="none" stroke="#4e85bd" stroke-width="1"/>
</g>
<g transform="translate(921.90 479.80)"><svg width="23.20" height="23.30" overflow="hidden"><rect width="23.20" height="23.30" fill="url(#cb)"/><path d="M5 19c4 5 13 2 17-2" fill="none" stroke="#111" stroke-width="1.3" stroke-linecap="round" opacity="1"/><g transform="translate(8.00 13.00) rotate(-40)"><path d="M0 0L7.43 -3.38L7.43 3.38z" fill="#d8c0a0"/><path d="M0 0L2.60 -1.15L2.60 1.15z" fill="#222"/><rect x="7.43" y="-3.38" width="17.00" height="6.75" fill="#b89a80"/><rect x="7.43" y="-3.38" width="17.00" height="2.02" fill="#fff" opacity=".25"/></g></svg>
</g>
<g transform="translate(946.40 479.80)"><svg width="23.20" height="23.30" overflow="hidden"><rect width="23.20" height="23.30" fill="url(#cb)"/><path d="M6 19c2-3 4-4 5-1s3 2 5-1 3 0 6-1" fill="none" stroke="#222" stroke-width="0.9" stroke-linecap="round" opacity="1"/><g transform="translate(8.00 13.00) rotate(-40)"><path d="M0 0L5.05 -2.29L5.05 2.29z" fill="#e8e8e8"/><path d="M0 0L1.77 -0.78L1.77 0.78z" fill="#333"/><rect x="5.05" y="-2.29" width="18.00" height="4.59" fill="#a0a0a0"/><rect x="5.05" y="-2.29" width="18.00" height="1.38" fill="#fff" opacity=".25"/></g></svg>
</g>
<g transform="translate(970.90 479.80)"><svg width="23.20" height="23.30" overflow="hidden"><rect width="23.20" height="23.30" fill="url(#cb)"/><path d="M3 6l2-2m0 2l-2-2" stroke="#333" stroke-width=".6"/><path d="M4 20c6-5 12-3 19 -4" fill="none" stroke="#555" stroke-width="1.6" stroke-linecap="round" opacity="0.8"/><g transform="translate(9.00 14.00) rotate(-40)"><path d="M0 0L6.24 -2.84L6.24 2.84z" fill="#d0a050"/><path d="M0 0L2.18 -0.96L2.18 0.96z" fill="#222"/><rect x="6.24" y="-2.84" width="17.00" height="5.67" fill="#e0c030"/><rect x="6.24" y="-2.84" width="17.00" height="1.70" fill="#fff" opacity=".25"/></g></svg>
</g>
<g transform="translate(921.90 504.10)"><svg width="23.20" height="23.30" overflow="hidden"><rect width="23.20" height="23.30" fill="url(#cb)"/><ellipse cx="12" cy="17.5" rx="11" ry="5" fill="#555" opacity=".6"/><g transform="translate(8.00 11.00) rotate(-40)"><path d="M0 0L8.17 -3.71L8.17 3.71z" fill="#d8b888"/><path d="M0 0L2.86 -1.26L2.86 1.26z" fill="#111"/><rect x="8.17" y="-3.71" width="17.00" height="7.43" fill="#2d6a3a"/><rect x="8.17" y="-3.71" width="17.00" height="2.23" fill="#fff" opacity=".25"/><rect x="9.17" y="-3.71" width="1.2" height="7.43" fill="#c8a040"/></g></svg>
</g>
<g transform="translate(946.40 504.10)"><svg width="23.20" height="23.30" overflow="hidden"><rect width="23.20" height="23.30" fill="url(#cb)"/><path d="M3 19l1.5-3 1.5 3 1.5-3 1.5 3 1.5-3 1.5 3M12 17l3 1 4-2 3 1" fill="none" stroke="#111" stroke-width="1.3" stroke-linecap="round" opacity="1"/><g transform="translate(8.00 13.00) rotate(-40)"><path d="M0 0L5.94 -2.70L5.94 2.70z" fill="#d8d8d8"/><path d="M0 0L2.08 -0.92L2.08 0.92z" fill="#333"/><rect x="5.94" y="-2.70" width="17.00" height="5.40" fill="#3a6ac0"/><rect x="5.94" y="-2.70" width="17.00" height="1.62" fill="#fff" opacity=".25"/></g></svg>
</g>
<g transform="translate(970.90 504.10)"><svg width="23.20" height="23.30" overflow="hidden"><rect width="23.20" height="23.30" fill="url(#cb)"/><path d="M5 18c3 3 5-2 8 0s4 1 9-1" fill="none" stroke="#333" stroke-width="0.7" stroke-linecap="round" opacity="1"/><g transform="translate(7.00 13.00) rotate(-40)"><path d="M0 0L5.35 -2.43L5.35 2.43z" fill="#999"/><path d="M0 0L1.87 -0.83L1.87 0.83z" fill="#222"/><rect x="5.35" y="-2.43" width="18.00" height="4.86" fill="#303040"/><rect x="5.35" y="-2.43" width="18.00" height="1.46" fill="#fff" opacity=".25"/></g></svg>
</g>
<g transform="translate(921.90 528.40)"><svg width="23.20" height="23.30" overflow="hidden"><rect width="23.20" height="23.30" fill="url(#cb)"/><g transform="translate(7.00 15.00) rotate(-40)"><path d="M0 0L4.46 -2.03L4.46 2.03z" fill="#b8b8b8"/><path d="M0 0L1.56 -0.69L1.56 0.69z" fill="#222"/><rect x="4.46" y="-2.03" width="19.00" height="4.05" fill="#303030"/><rect x="4.46" y="-2.03" width="19.00" height="1.22" fill="#fff" opacity=".25"/><rect x="5.46" y="-2.03" width="1.2" height="4.05" fill="#3a90d0"/></g></svg>
</g>
<g transform="translate(946.40 528.40)"><svg width="23.20" height="23.30" overflow="hidden"><rect width="23.20" height="23.30" fill="url(#cb)"/><g transform="translate(7.00 15.00) rotate(-40)"><path d="M0 0L4.46 -2.03L4.46 2.03z" fill="#c8c8c8"/><path d="M0 0L1.56 -0.69L1.56 0.69z" fill="#222"/><rect x="4.46" y="-2.03" width="19.00" height="4.05" fill="#e8d020"/><rect x="4.46" y="-2.03" width="19.00" height="1.22" fill="#fff" opacity=".25"/></g></svg>
</g>
<g transform="translate(970.90 528.40)"><svg width="23.20" height="23.30" overflow="hidden"><rect width="23.20" height="23.30" fill="url(#cb)"/><rect width="23.2" height="23.3" fill="url(#rw)"/><g transform="translate(7.00 15.00) rotate(-40)"><path d="M0 0L4.46 -2.03L4.46 2.03z" fill="#d8d8d8"/><path d="M0 0L1.56 -0.69L1.56 0.69z" fill="#111"/><rect x="4.46" y="-2.03" width="19.00" height="4.05" fill="#202020"/><rect x="4.46" y="-2.03" width="19.00" height="1.22" fill="#fff" opacity=".25"/></g></svg>
</g>
</g></svg>
<div class="a" style="left:1018.5px;top:358px;width:5.5px;height:187px;background:#3e3e3e"></div>
<div class="a" style="left:1018.8px;top:362.3px;width:5.2px;height:29.5px;background:#404040;border:0.6px solid #505050"></div>
<svg class="a" style="left:1019px;top:359px" width="5" height="4" viewBox="0 0 5 4"><path d="M1 2.8l1.5-1.6 1.5 1.6" fill="none" stroke="#999" stroke-width=".6"/></svg>
<svg class="a" style="left:1019px;top:540.5px" width="5" height="4" viewBox="0 0 5 4"><path d="M1 1.2l1.5 1.6 1.5-1.6" fill="none" stroke="#999" stroke-width=".6"/></svg>
<div class="a" style="left:921.6px;top:545.2px;width:66.2px;height:8.2px;background:#3a3a3a;border:0.6px solid #363636"></div>
<div class="t" style="left:923.30px;top:548.22px;font-size:4.94px;line-height:4.94px;color:#6e6e6e;transform:scaleX(0.913);transform-origin:0 0;">Search</div>
<div class="a" style="left:989.8px;top:546.8px;width:5.6px;height:6px;background:#3c3c3c"></div><svg class="a" style="left:989.8px;top:546.8px" width="6" height="6" viewBox="0 0 6 6"><path d="M1.2 3.2l1.2 1.6 2.2-3.8" fill="none" stroke="#ddd" stroke-width=".7"/></svg>
<div class="t" style="left:997.80px;top:548.07px;font-size:5.23px;line-height:5.23px;color:#d0d0d0;transform:scaleX(0.909);transform-origin:0 0;">Filter in Tag</div>
</body></html>
